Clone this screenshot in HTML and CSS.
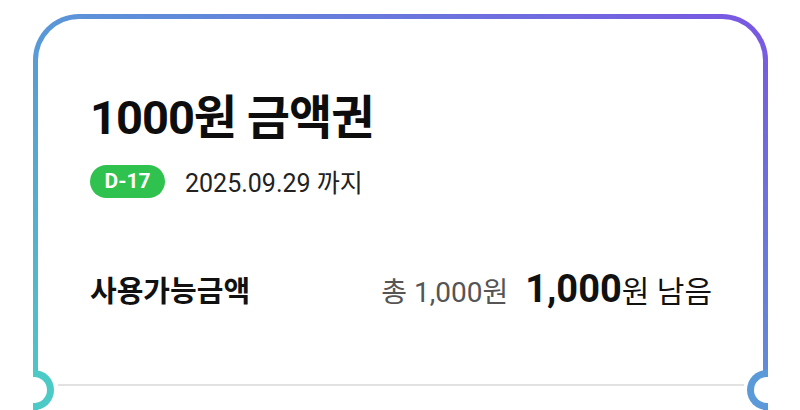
FILE: index.html
```html
<!DOCTYPE html>
<html lang="ko">
<head>
<meta charset="utf-8">
<link rel="stylesheet" href="styles.css">
</head>
<body>
<div class="card">
  <h1 class="title">1000원 금액권</h1>
  <div class="meta">
    <span class="badge">D-17</span>
    <span class="date">2025.09.29 까지</span>
  </div>
  <div class="amount-row">
    <span class="label">사용가능금액</span>
    <span class="amounts">
      <span class="total">총 1,000원</span>
      <span class="remain"><b>1,000</b>원 남음</span>
    </span>
  </div>
  <div class="sep"></div>
  <span class="notch notch-left"></span>
  <span class="notch notch-right"></span>
</div>
</body>
</html>
```

FILE: styles.css
```css
html, body {
  margin: 0;
  padding: 0;
  background: #ffffff;
  overflow: hidden;
}
body {
  font-family: Roboto, "Noto Sans CJK KR", sans-serif;
  color: #111;
  width: 800px;
  height: 410px;
}
.card {
  position: relative;
  box-sizing: border-box;
  margin: 14px 0 0 33px;
  width: 735px;
  height: 440px;
  border: 5px solid transparent;
  border-radius: 46px;
  background:
    linear-gradient(#fff, #fff) padding-box,
    linear-gradient(to top right, #4ccfc4 0%, #5a96d8 50%, #7a56e2 100%) border-box;
  padding: 70px 51px 0 52px;
}
.title {
  margin: 0;
  font-size: 47px;
  font-weight: 700;
  line-height: 58px;
  letter-spacing: -1px;
  color: #0d0d0d;
}
.meta {
  display: flex;
  align-items: center;
  gap: 20px;
  margin-top: 16px;
}
.badge {
  display: inline-flex;
  align-items: center;
  justify-content: center;
  width: 75px;
  height: 33px;
  border-radius: 17px;
  background: #2fc24f;
  color: #fff;
  font-weight: 700;
  font-size: 21px;
}
.date {
  font-size: 25px;
  color: #222;
}
.amount-row {
  display: flex;
  justify-content: space-between;
  align-items: baseline;
  margin-top: 68px;
}
.label {
  font-size: 29px;
  font-weight: 700;
  color: #111;
}
.amounts {
  display: flex;
  align-items: baseline;
  gap: 17px;
}
.total {
  font-size: 28px;
  color: #555;
}
.remain {
  font-size: 30px;
  color: #111;
}
.remain b {
  font-size: 38px;
  font-weight: 700;
}
.sep {
  margin: 73px -32px 0 -32px;
  height: 2px;
  background: #e2e2e2;
}
.notch {
  position: absolute;
  top: 351px;
  width: 14px;
  height: 26px;
  border: 7px solid #4ccac6;
  background: #fff;
}
.notch-left {
  left: -5px;
  border-left: none;
  border-radius: 0 21px 21px 0;
}
.notch-right {
  right: -5px;
  border-right: none;
  border-radius: 21px 0 0 21px;
  border-color: #5b9ad8;
}
```
